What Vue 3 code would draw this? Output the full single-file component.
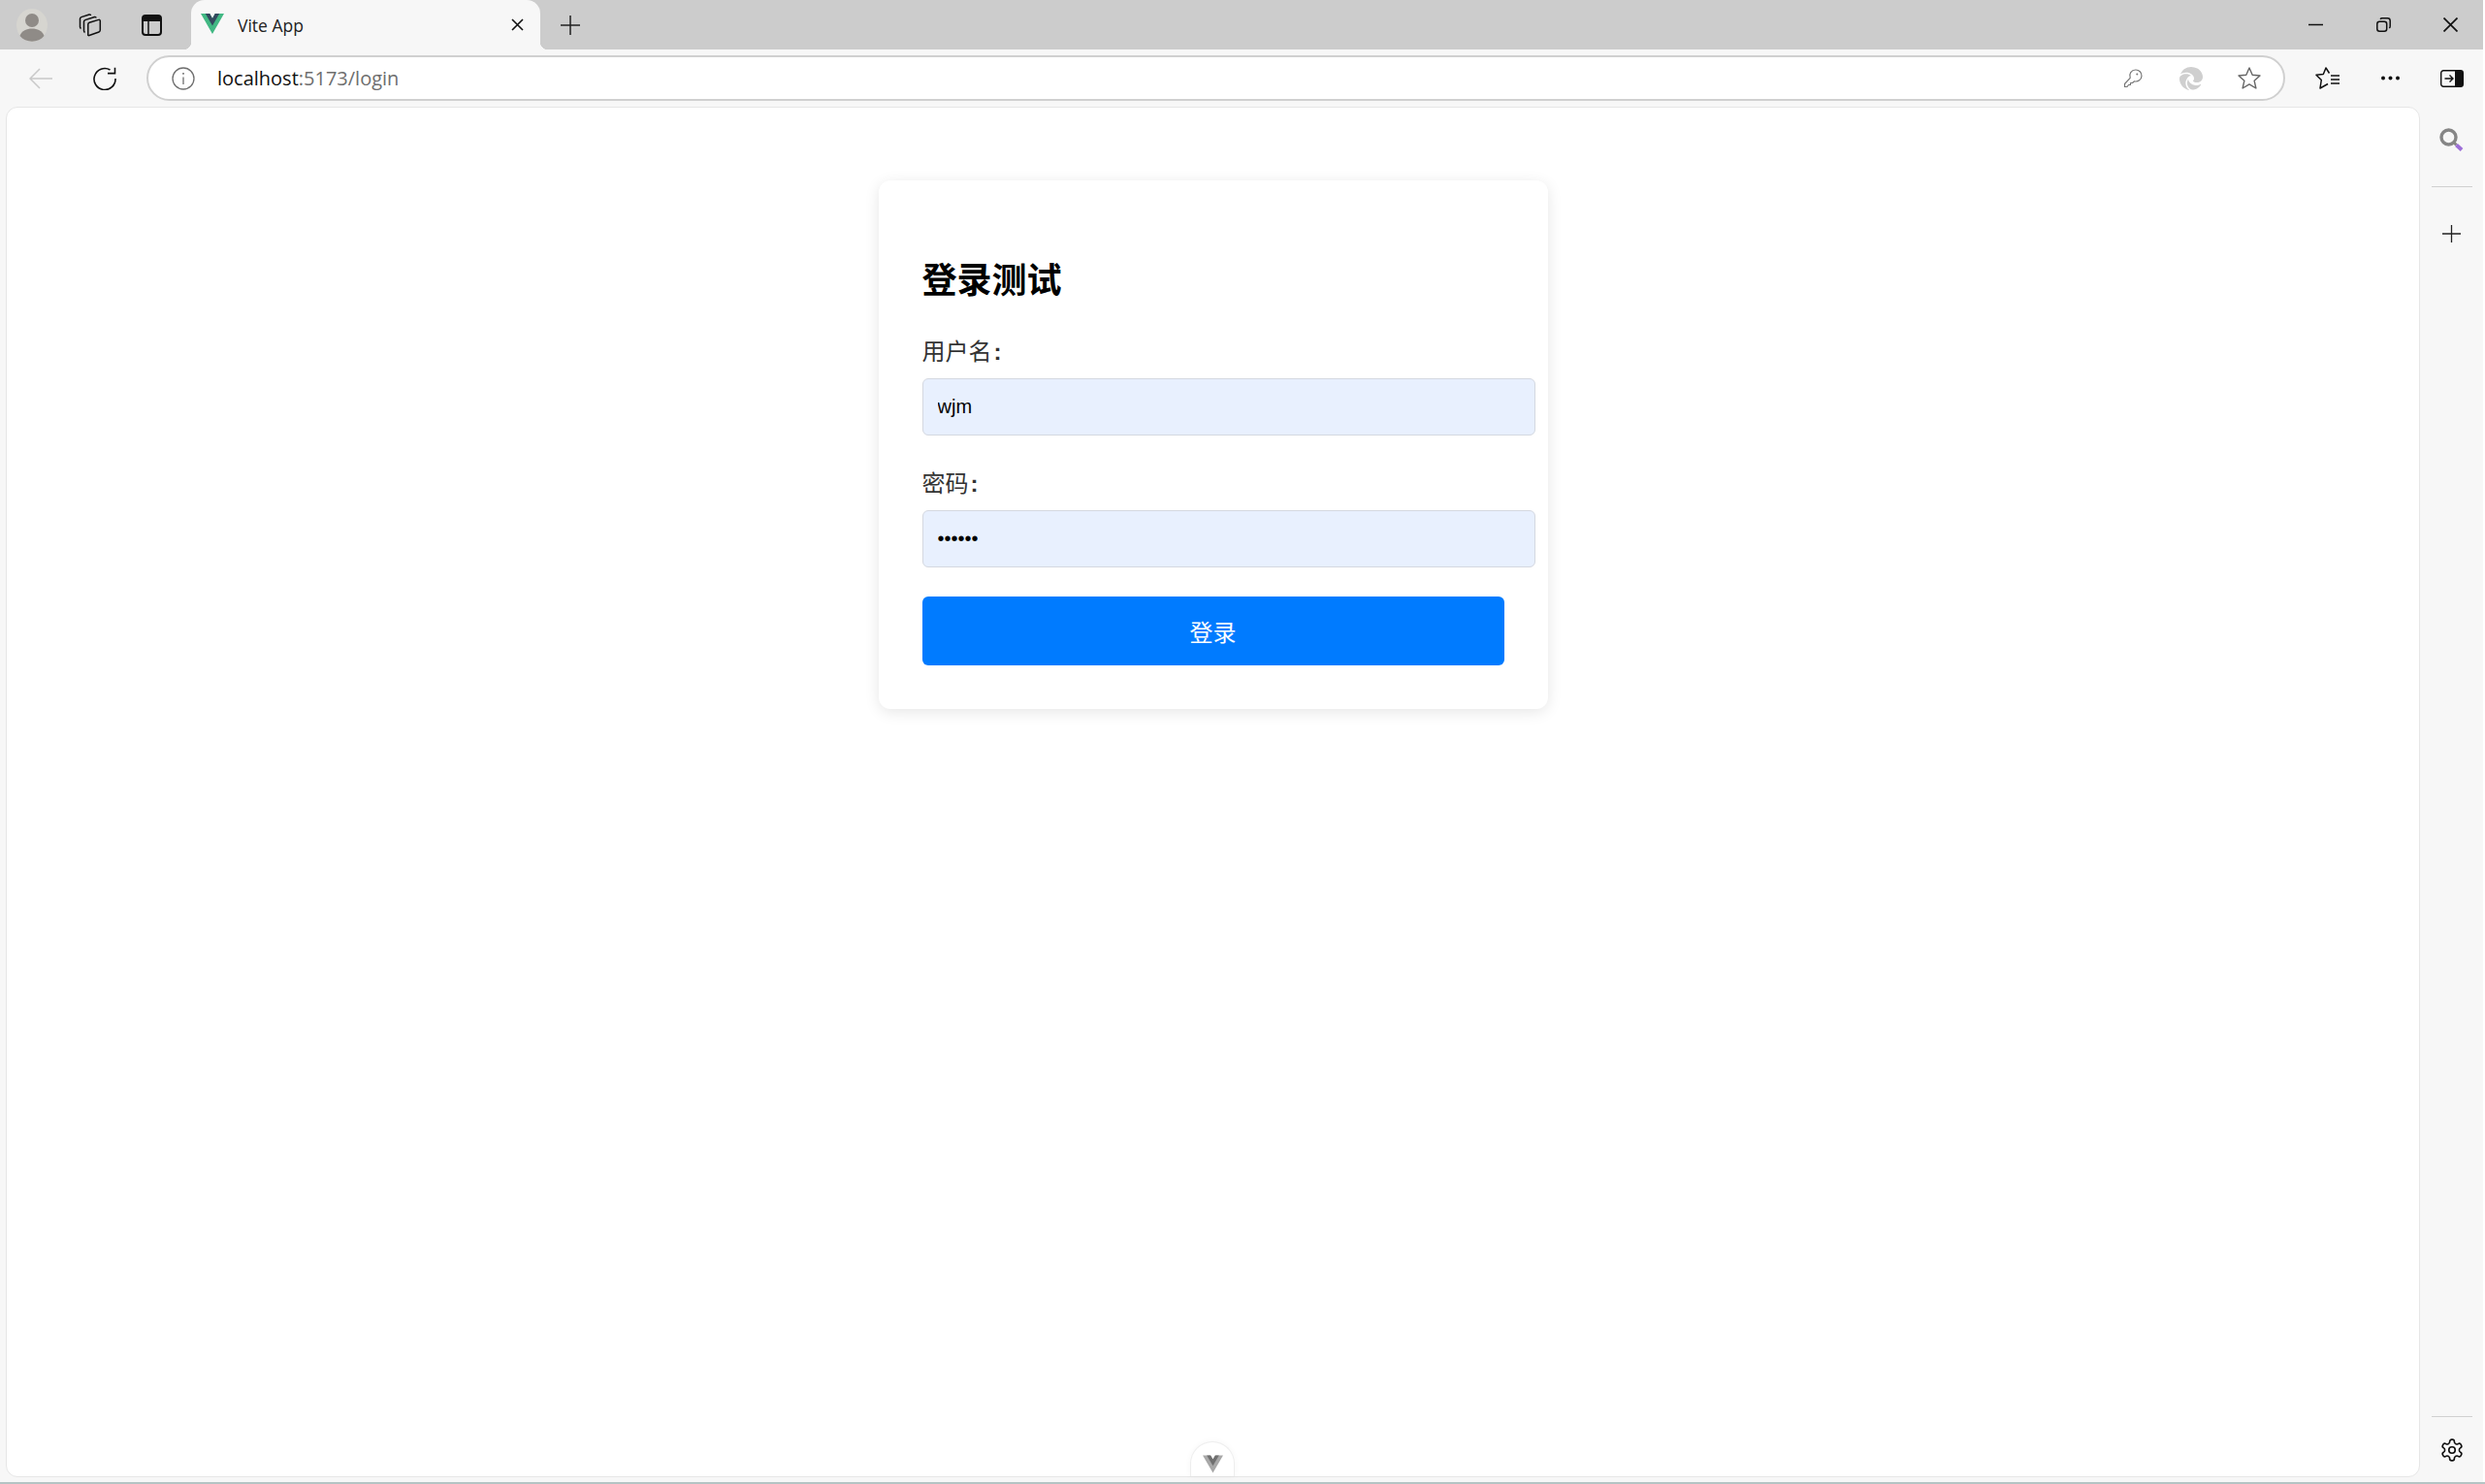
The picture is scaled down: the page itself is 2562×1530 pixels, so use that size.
<template>
  <div class="screen">
    <div class="shell">
      <div class="tabstrip">
        <svg class="avatar" viewBox="0 0 32 34">
          <ellipse cx="16" cy="17" rx="16" ry="17" fill="#d6d5d0" />
          <circle cx="16" cy="12" r="7" fill="#8f8b87" />
          <path d="M3.500 28c2-5.500 7-7.500 12.500-7.500S26.500 22.500 28.500 28c-3 3.700-7.500 5.700-12.500 5.700S6.500 31.700 3.500 28z" fill="#8f8b87" />
        </svg>
        <svg class="collections" viewBox="0 0 24 24" fill="none" stroke="#111" stroke-width="1.500" stroke-linejoin="round">
          <path d="M11 22.500l10-3.500a2 2 0 0 0 1.300-1.900V7.500a1.200 1.200 0 0 0-1.600-1.100L11.200 9.200a2 2 0 0 0-1.400 1.900v10.400a.8.800 0 0 0 1.200 1z" />
          <path d="M6.500 19.500a2 2 0 0 1-1-1.700V8.500a2 2 0 0 1 1.300-1.900L16.500 3.500a1.200 1.200 0 0 1 1.500 1" />
          <path d="M2.500 15.500a2 2 0 0 1-1-1.700V5.500a2 2 0 0 1 1.300-1.900L11 1a1.200 1.200 0 0 1 1.500 1" />
        </svg>
        <svg class="tab-actions" viewBox="0 0 21 22" fill="none">
          <rect x="1" y="1" width="19" height="20" rx="3" stroke="#111" stroke-width="2" />
          <path d="M1 4a3 3 0 0 1 3-3h13a3 3 0 0 1 3 3v3H1z" fill="#111" />
          <path d="M7 7v14" stroke="#111" stroke-width="1.500" />
        </svg>
        <div class="tab">
          <svg class="vue-logo" viewBox="0 0 261.760 226.690">
            <path d="M161.096.001l-30.225 52.351L100.647.001H0l130.877 226.688L261.749.001z" fill="#41b883" />
            <path d="M161.096.001l-30.225 52.351L100.647.001H52.346l78.526 136.010L209.398.001z" fill="#34495e" />
          </svg>
          <span class="tab-title">Vite App</span>
          <svg class="tab-close" viewBox="0 0 13 13" stroke="#111" stroke-width="1.600">
            <path d="M1 1l11 11M12 1L1 12" />
          </svg>
        </div>
        <svg class="new-tab" viewBox="0 0 20 20" stroke="#222" stroke-width="1.500">
          <path d="M10 0v20M0 10h20" />
        </svg>
        <div class="window-controls">
          <svg viewBox="0 0 15 15" stroke="#111" stroke-width="1.500">
            <path d="M0 7.500h15" />
          </svg>
          <svg viewBox="0 0 15 15" fill="none" stroke="#111" stroke-width="1.500">
            <rect x=".8" y="4.300" width="9.900" height="9.900" rx="2.500" />
            <path d="M4 1.700A2.500 2.500 0 0 1 6 .8h5.500a2.700 2.700 0 0 1 2.700 2.700V9a2.500 2.500 0 0 1-.9 2" />
          </svg>
          <svg viewBox="0 0 15 15" stroke="#111" stroke-width="1.700">
            <path d="M.5.500l14 14M14.500.500l-14 14" />
          </svg>
        </div>
      </div>

      <div class="toolbar">
        <svg class="back" viewBox="0 0 24 22" fill="none" stroke="#c9c9c9" stroke-width="1.500">
          <path d="M24 11H1M11 1L1 11l10 10" />
        </svg>
        <svg class="refresh" viewBox="0 0 24 24" fill="none" stroke="#111" stroke-width="1.600">
          <path d="M17.500 3A11 11 0 1 0 23 12" />
          <path d="M15 5.800h7.500V0" transform="translate(0 .8)" />
        </svg>
        <div class="address">
          <svg class="info" viewBox="0 0 24 24" fill="none" stroke="#6f6f6f" stroke-width="1.300">
            <circle cx="12" cy="12" r="11" />
            <path d="M12 10.500V18" />
            <path d="M12 6v1.800" stroke-width="1.600" />
          </svg>
          <span class="url">localhost<span class="url-rest">:5173/login</span></span>
          <svg class="key" viewBox="0 0 20 20" fill="none" stroke="#777" stroke-width="1.200" stroke-linejoin="round">
            <path d="M12.800 1a6 6 0 0 1 6.200 6.200 6 6 0 0 1-7.500 5.600L9.500 14.500H7.500v2H5.500L4 18.500H1.500v-3L7.200 9.300A6 6 0 0 1 12.800 1z" />
            <circle cx="14.300" cy="5.500" r="1" fill="#777" stroke="none" />
          </svg>
          <svg class="edge" viewBox="0 0 24 24" fill="#cfcfcf">
            <path d="M21.860 17.860q.14 0 .25.12.1.13.1.25t-.11.33l-.32.46-.43.53-.44.5q-.21.25-.38.42l-.22.23q-.58.53-1.340 1.040-.76.51-1.600.91-.86.4-1.740.64t-1.670.24q-.9 0-1.690-.28-.8-.28-1.480-.78-.68-.5-1.220-1.170-.53-.66-.92-1.440-.38-.77-.58-1.600-.2-.83-.2-1.670 0-1 .32-1.960.33-.97.87-1.800.14.95.55 1.770.41.82 1.020 1.500.6.68 1.380 1.210.78.54 1.640.9.86.36 1.770.56.92.2 1.800.2 1.120 0 2.180-.24 1.060-.23 2.060-.72l.2-.1.2-.05zm-15.500-1.270q0 1.100.27 2.150.27 1.060.78 2.030.51.96 1.240 1.770.74.82 1.660 1.400-1.470-.2-2.800-.74-1.330-.55-2.480-1.370-1.150-.83-2.080-1.900-.92-1.070-1.580-2.330T.36 14.940Q0 13.540 0 12.060q0-.81.32-1.490.31-.68.83-1.230.53-.55 1.200-.96.66-.4 1.350-.66.74-.27 1.500-.39.78-.12 1.550-.12.7 0 1.420.1.72.12 1.400.35.68.23 1.320.57.63.35 1.160.83-.35 0-.7.07-.33.07-.65.23v-.02q-.63.28-1.200.74-.57.46-1.050 1.040-.48.58-.87 1.260-.38.67-.65 1.390-.27.71-.42 1.440-.15.72-.15 1.380zM11.960.06q1.700 0 3.330.39 1.630.38 3.070 1.150 1.430.77 2.620 1.930 1.180 1.160 1.980 2.700.49.94.76 1.960.28 1 .28 2.080 0 .89-.23 1.700-.24.8-.69 1.480-.45.68-1.100 1.220-.64.53-1.450.88-.54.24-1.110.36-.58.13-1.160.13-.42 0-.97-.03-.54-.03-1.100-.12-.55-.09-1.050-.28-.5-.19-.84-.5-.12-.09-.23-.24-.1-.16-.1-.33 0-.15.16-.35.16-.2.35-.5.2-.28.36-.68.16-.4.16-.95 0-1.060-.4-1.960-.4-.91-1.060-1.640-.66-.74-1.520-1.280-.86-.55-1.790-.89-.84-.3-1.720-.44-.87-.14-1.760-.14-1.550 0-3.060.45T.94 7.550q.71-1.740 1.810-3.130 1.100-1.380 2.520-2.350Q6.680 1.100 8.370.58q1.700-.52 3.580-.52Z" />
          </svg>
          <svg class="star" viewBox="0 0 24 24" fill="none" stroke="#666" stroke-width="1.400" stroke-linejoin="round">
            <path d="M12 1l3.200 7.300 7.800.7-5.900 5.200 1.800 7.800-6.900-4.100L5.100 22l1.800-7.800L1 9l7.800-.7z" />
          </svg>
        </div>
        <svg class="favorites" viewBox="0 0 25 23" fill="none" stroke="#111" stroke-width="1.500" stroke-linejoin="round">
          <path d="M14.500 6.500L11 1 8.300 7.500 1 8.300l5.300 5.200L5 22l8-4.500" />
          <path d="M16 9h9M16 13h9M16 17h9" />
        </svg>
        <svg class="dots" viewBox="0 0 19 5" fill="#111">
          <circle cx="2" cy="2.500" r="2" />
          <circle cx="9.500" cy="2.500" r="2" />
          <circle cx="17" cy="2.500" r="2" />
        </svg>
        <svg class="side-toggle" viewBox="0 0 24 18" fill="none">
          <rect x=".7" y=".7" width="22.600" height="16.600" rx="2.500" stroke="#111" stroke-width="1.400" />
          <path d="M15 .7h6a2.300 2.300 0 0 1 2.300 2.300v12a2.300 2.300 0 0 1-2.300 2.300h-6z" fill="#111" />
          <path d="M4.500 9h8M9.500 5.500L13 9l-3.500 3.500" stroke="#111" stroke-width="1.400" />
        </svg>
      </div>

      <div class="body">
        <main class="page">
          <form class="login-card" @submit.prevent>
            <h2>登录测试</h2>
            <div class="form-group">
              <label>用户名<span class="colon">:</span></label>
              <input v-model="username" type="text" />
            </div>
            <div class="form-group">
              <label>密码<span class="colon">:</span></label>
              <input v-model="password" type="password" />
            </div>
            <button type="submit">登录</button>
          </form>
          <div class="vue-devtools">
            <svg viewBox="0 0 261.760 226.690">
              <path d="M161.096.001l-30.225 52.351L100.647.001H0l130.877 226.688L261.749.001z" fill="#a8a8a8" />
              <path d="M161.096.001l-30.225 52.351L100.647.001H52.346l78.526 136.010L209.398.001z" fill="#707070" />
            </svg>
          </div>
        </main>
        <aside class="sidebar">
          <svg class="search" viewBox="0 0 25 24" fill="none">
            <circle cx="9.500" cy="9.500" r="7.500" stroke="#868686" stroke-width="3.400" />
            <path d="M15 15l2.500 2.500" stroke="#868686" stroke-width="3" />
            <path d="M17.500 17.500l5.500 5" stroke="#9d6fd8" stroke-width="4" />
          </svg>
          <div class="divider first"></div>
          <svg class="add" viewBox="0 0 19 18" stroke="#222" stroke-width="1.300">
            <path d="M9.500 0v18M0 9h19" />
          </svg>
          <div class="divider last"></div>
          <svg class="gear" viewBox="0 0 24 24" fill="none" stroke="#111" stroke-width="1.500">
            <path d="M12.220 2h-.44a2 2 0 0 0-2 2v.18a2 2 0 0 1-1 1.730l-.43.25a2 2 0 0 1-2 0l-.15-.08a2 2 0 0 0-2.730.73l-.22.38a2 2 0 0 0 .73 2.730l.15.1a2 2 0 0 1 1 1.720v.51a2 2 0 0 1-1 1.740l-.15.09a2 2 0 0 0-.73 2.730l.22.38a2 2 0 0 0 2.730.73l.15-.08a2 2 0 0 1 2 0l.43.25a2 2 0 0 1 1 1.730V20a2 2 0 0 0 2 2h.44a2 2 0 0 0 2-2v-.18a2 2 0 0 1 1-1.730l.43-.25a2 2 0 0 1 2 0l.15.08a2 2 0 0 0 2.730-.73l.22-.39a2 2 0 0 0-.73-2.730l-.15-.08a2 2 0 0 1-1-1.740v-.5a2 2 0 0 1 1-1.740l.15-.09a2 2 0 0 0 .73-2.730l-.22-.38a2 2 0 0 0-2.730-.73l-.15.08a2 2 0 0 1-2 0l-.43-.25a2 2 0 0 1-1-1.730V4a2 2 0 0 0-2-2z" />
            <circle cx="12" cy="12" r="3" />
          </svg>
        </aside>
      </div>
    </div>
    <div class="bottom-strip"></div>
  </div>
</template>

<script setup>
import { ref } from 'vue'

const username = ref('wjm')
const password = ref('123456')
</script>

<style scoped>
.screen {
  width: 2562px;
  height: 1530px;
  display: flex;
  flex-direction: column;
  background: #fff;
  overflow: hidden;
  font-family: "Liberation Sans", "Noto Sans CJK SC", sans-serif;
}

.shell {
  width: 2560px;
  flex: 1;
  min-height: 0;
  display: flex;
  flex-direction: column;
  background: #f7f7f7;
}

.bottom-strip {
  height: 2px;
  background: #b4c4c4;
}

svg {
  display: block;
  flex: none;
}

/* tab strip */
.tabstrip {
  height: 51px;
  flex: none;
  display: flex;
  align-items: center;
  background: #ccc;
}

.avatar {
  width: 32px;
  height: 34px;
  margin-left: 17px;
}

.collections {
  width: 24px;
  height: 24px;
  margin-left: 32px;
}

.tab-actions {
  width: 21px;
  height: 22px;
  margin-left: 41px;
}

.tab {
  position: relative;
  width: 360px;
  height: 51px;
  margin-left: 30px;
  padding: 0 17px 0 10px;
  box-sizing: border-box;
  display: flex;
  align-items: center;
  background: #f7f7f7;
  border-radius: 14px 14px 0 0;
}

.tab::before,
.tab::after {
  content: "";
  position: absolute;
  bottom: 0;
  width: 8px;
  height: 8px;
}

.tab::before {
  left: -8px;
  background: radial-gradient(circle at 0 0, #ccc 8px, #f7f7f7 8.500px);
}

.tab::after {
  right: -8px;
  background: radial-gradient(circle at 100% 0, #ccc 8px, #f7f7f7 8.500px);
}

.vue-logo {
  width: 24px;
  height: 21px;
  margin-bottom: 2px;
}

.tab-title {
  margin-left: 14px;
  font-family: "Open Sans", sans-serif;
  font-size: 17.500px;
  color: #222;
  flex: 1;
}

.tab-close {
  width: 13px;
  height: 13px;
}

.new-tab {
  width: 20px;
  height: 20px;
  margin-left: 21px;
}

.window-controls {
  margin-left: auto;
  padding-right: 26px;
  display: flex;
  gap: 54.500px;
}

.window-controls svg {
  width: 15px;
  height: 15px;
}

/* toolbar */
.toolbar {
  height: 59px;
  flex: none;
  padding-right: 20px;
  display: flex;
  align-items: center;
}

.back {
  width: 24px;
  height: 22px;
  margin-left: 30px;
}

.refresh {
  width: 24px;
  height: 24px;
  margin-left: 42px;
}

.address {
  flex: 1;
  height: 47px;
  margin-left: 31px;
  padding: 0 23px 0 24px;
  box-sizing: border-box;
  display: flex;
  align-items: center;
  background: #fff;
  border: 2px solid #d0d0d0;
  border-radius: 24px;
}

.info {
  width: 24px;
  height: 24px;
}

.url {
  margin-left: 23px;
  font-family: "Open Sans", sans-serif;
  font-size: 20px;
  color: #111;
  flex: 1;
}

.url-rest {
  color: #6e6e6e;
}

.key {
  width: 20px;
  height: 20px;
}

.edge {
  width: 24px;
  height: 24px;
  margin-left: 38px;
}

.star {
  width: 24px;
  height: 24px;
  margin-left: 36px;
}

.favorites {
  width: 25px;
  height: 23px;
  margin-left: 31px;
}

.dots {
  width: 19px;
  height: 5px;
  margin-left: 43px;
}

.side-toggle {
  width: 24px;
  height: 18px;
  margin-left: 42px;
}

/* content */
.body {
  flex: 1;
  min-height: 0;
  display: flex;
  padding: 0 0 5px 6px;
}

.page {
  position: relative;
  width: 2489px;
  box-sizing: border-box;
  padding-top: 75px;
  background: #fff;
  border: 1px solid #e6e6e6;
  border-radius: 12px;
}

.login-card {
  width: 690px;
  margin: 0 auto;
  padding: 45px;
  box-sizing: border-box;
  background: #fff;
  border-radius: 12px;
  box-shadow: 0 3px 15px rgba(0, 0, 0, 0.1);
}

.login-card h2 {
  margin: 32px 0 26px;
  font-size: 36px;
  line-height: 54px;
  font-weight: 700;
  color: #000;
}

.form-group {
  margin-bottom: 30px;
}

.form-group label {
  display: block;
  margin-bottom: 8px;
  font-size: 24px;
  line-height: 39px;
  color: #333;
}

.colon {
  margin-left: 2px;
  font-weight: 700;
}

.form-group input {
  display: block;
  width: 600px;
  height: 27px;
  padding: 15px;
  box-sizing: content-box;
  background: #e8f0fe;
  border: 1.500px solid #d4d8e0;
  border-radius: 6px;
  font-family: "Liberation Sans", sans-serif;
  font-size: 20px;
  color: #000;
  outline: none;
}

.login-card button {
  display: block;
  width: 600px;
  height: 71px;
  padding: 0;
  background: #007bff;
  border: none;
  border-radius: 6px;
  font-family: "Liberation Sans", "Noto Sans CJK SC", sans-serif;
  font-size: 24px;
  color: #fff;
}

.vue-devtools {
  position: absolute;
  left: 1220px;
  bottom: 0;
  width: 46px;
  height: 36px;
  padding-top: 13px;
  box-sizing: border-box;
  background: #fff;
  border: 1px solid #eee;
  border-bottom: none;
  border-radius: 23px 23px 0 0;
  box-shadow: 0 0 6px rgba(0, 0, 0, 0.04);
}

.vue-devtools svg {
  width: 21px;
  height: 19px;
  margin: 0 auto;
}

/* right sidebar */
.sidebar {
  flex: 1;
  padding: 22px 0 15px;
  display: flex;
  flex-direction: column;
  align-items: center;
}

.search {
  width: 25px;
  height: 24px;
}

.divider {
  width: 42px;
  height: 1px;
  background: #d0d0d0;
}

.divider.first {
  margin-top: 36px;
}

.add {
  width: 19px;
  height: 18px;
  margin-top: 39px;
}

.divider.last {
  margin-top: auto;
}

.gear {
  width: 26px;
  height: 26px;
  margin-top: 21px;
}
</style>

<style>
html,
body {
  margin: 0;
  background: #fff;
}
</style>
